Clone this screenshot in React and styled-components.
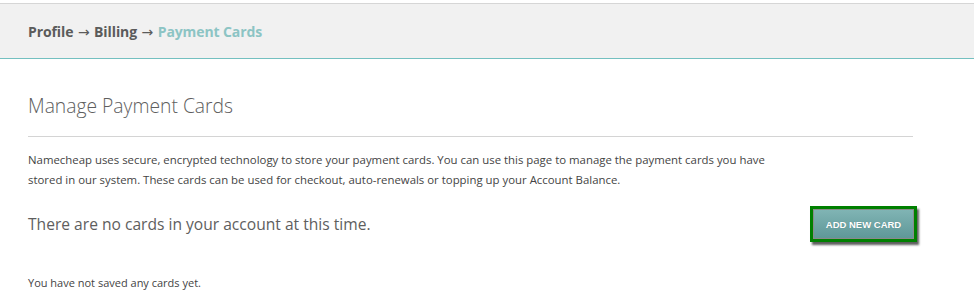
import React from 'react'
import styled, { createGlobalStyle } from 'styled-components'

const GlobalStyle = createGlobalStyle`
  html, body {
    margin: 0;
    padding: 0;
    background: #fff;
  }
  body {
    font-family: 'Open Sans', 'DejaVu Sans', sans-serif;
    color: #555;
  }
`

const Page = styled.div`
  width: 978px;
  padding-top: 3px;
`

const Header = styled.div`
  width: 974px;
  height: 56px;
  box-sizing: border-box;
  background: #f1f1f1;
  border-top: 1px solid #d6d6d6;
  border-bottom: 1px solid #74c0c0;
  display: flex;
  align-items: center;
  padding: 0 28px 0;
`

const Crumbs = styled.div`
  font-size: 14px;
  font-weight: 700;
  color: #5b5b5b;
  letter-spacing: -0.1px;
`

const Arrow = styled.span`
  font-family: 'DejaVu Sans', sans-serif;
  font-weight: 400;
  margin: 0 1px;
`

const Current = styled.span`
  color: #8cc4c4;
`

const Content = styled.div`
  padding: 33px 65px 0 28px;
`

const Title = styled.h1`
  margin: 0;
  font-size: 19.3px;
  font-weight: 300;
  color: #5e5e5e;
  line-height: 28px;
  padding-bottom: 16px;
  border-bottom: 1px solid #d4d4d4;
`

const Intro = styled.p`
  margin: 13px 0 0;
  font-size: 11.4px;
  line-height: 20px;
  color: #444;
  white-space: nowrap;
`

const Row = styled.div`
  display: flex;
  align-items: center;
  justify-content: space-between;
  margin-top: 16px;
`

const Empty = styled.div`
  font-size: 15.6px;
  font-weight: 400;
  color: #5e5e5e;
`

const Highlight = styled.div`
  border: 3px solid #008000;
  box-shadow: 2px 3px 2px rgba(40, 40, 40, 0.75);
  margin-right: -4px;
`

const Button = styled.button`
  display: block;
  border: 1px solid #8a8a8a;
  background: linear-gradient(#80b4b4, #5f9898);
  color: #fff;
  font-family: 'Liberation Sans', Arial, sans-serif;
  font-weight: 700;
  font-size: 9.5px;
  height: 30px;
  width: 101px;
  padding: 0;
  text-shadow: 0 0 1px rgba(0, 0, 0, 0.2);
`

const Note = styled.p`
  margin: 33px 0 0;
  font-size: 11px;
  color: #444;
`

export default function App() {
  return (
    <Page>
      <GlobalStyle />
      <Header>
        <Crumbs>
          Profile <Arrow>→</Arrow> Billing <Arrow>→</Arrow> <Current>Payment Cards</Current>
        </Crumbs>
      </Header>
      <Content>
        <Title>Manage Payment Cards</Title>
        <Intro>
          Namecheap uses secure, encrypted technology to store your payment cards. You can use this page to manage the payment cards you have
          <br />
          stored in our system. These cards can be used for checkout, auto-renewals or topping up your Account Balance.
        </Intro>
        <Row>
          <Empty>There are no cards in your account at this time.</Empty>
          <Highlight>
            <Button>ADD NEW CARD</Button>
          </Highlight>
        </Row>
        <Note>You have not saved any cards yet.</Note>
      </Content>
    </Page>
  )
}
